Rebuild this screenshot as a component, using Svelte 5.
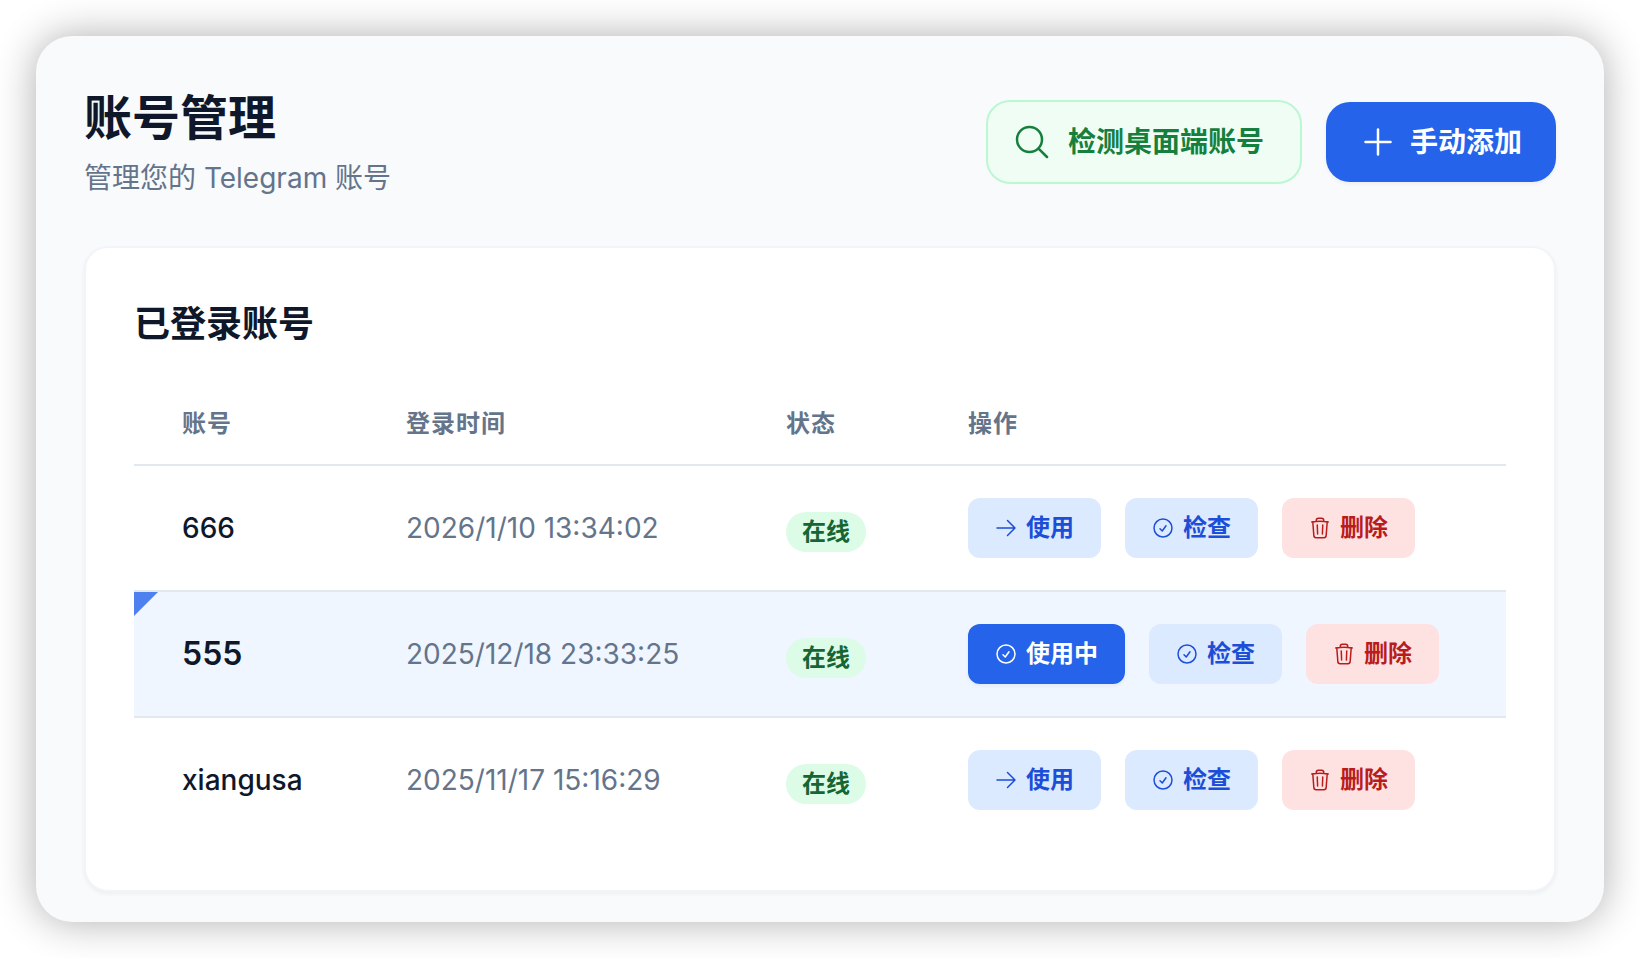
<script>
	const accounts = [
		{ name: '666', loginTime: '2026/1/10 13:34:02', active: false },
		{ name: '555', loginTime: '2025/12/18 23:33:25', active: true },
		{ name: 'xiangusa', loginTime: '2025/11/17 15:16:29', active: false }
	];

	const icons = {
		search: 'm21 21-5.197-5.197m0 0A7.5 7.5 0 1 0 5.196 5.196a7.5 7.5 0 0 0 10.607 10.607Z',
		plus: 'M12 4.5v15m7.5-7.5h-15',
		arrow: 'M13.5 4.5 21 12m0 0-7.5 7.5M21 12H3',
		check: 'M9 12.75 11.25 15 15 9.75M21 12a9 9 0 1 1-18 0 9 9 0 0 1 18 0Z',
		trash: 'm14.74 9-.346 9m-4.788 0L9.26 9m9.968-3.21c.342.052.682.107 1.022.166m-1.022-.165L18.16 19.673a2.25 2.25 0 0 1-2.244 2.077H8.084a2.25 2.25 0 0 1-2.244-2.077L4.772 5.79m14.456 0a48.108 48.108 0 0 0-3.478-.397m-12 .562c.34-.059.68-.114 1.022-.165m0 0a48.11 48.11 0 0 1 3.478-.397m7.5 0v-.916c0-1.18-.91-2.164-2.09-2.201a51.964 51.964 0 0 0-3.32 0c-1.18.037-2.09 1.022-2.09 2.201v.916m7.5 0a48.667 48.667 0 0 0-7.5 0'
	};
</script>

{#snippet icon(name)}
	<svg class="icon" viewBox="0 0 24 24" aria-hidden="true">
		<path d={icons[name]} />
	</svg>
{/snippet}

<main class="window">
	<header class="page-header">
		<div>
			<h1>账号管理</h1>
			<p>管理您的 Telegram 账号</p>
		</div>
		<div class="toolbar">
			<button type="button" class="btn btn--detect">{@render icon('search')}检测桌面端账号</button>
			<button type="button" class="btn btn--add">{@render icon('plus')}手动添加</button>
		</div>
	</header>

	<section class="card">
		<h2>已登录账号</h2>
		<table>
			<thead>
				<tr>
					<th class="col-name">账号</th>
					<th class="col-time">登录时间</th>
					<th class="col-status">状态</th>
					<th>操作</th>
				</tr>
			</thead>
			<tbody>
				{#each accounts as account}
					<tr class:active={account.active}>
						<td class="name">{account.name}</td>
						<td class="time">{account.loginTime}</td>
						<td class="status"><span class="badge">在线</span></td>
						<td>
							<div class="actions">
								{#if account.active}
									<button type="button" class="action action--current">{@render icon('check')}使用中</button>
								{:else}
									<button type="button" class="action">{@render icon('arrow')}使用</button>
								{/if}
								<button type="button" class="action">{@render icon('check')}检查</button>
								<button type="button" class="action action--delete">{@render icon('trash')}删除</button>
							</div>
						</td>
					</tr>
				{/each}
			</tbody>
		</table>
	</section>
</main>

<style>
	:global(body) {
		margin: 0;
		background: #fff;
	}

	.window {
		margin: 36px;
		padding: 50px 48px 30px;
		border-radius: 36px;
		background: #f8fafc;
		box-shadow: 0 0 40px rgba(0, 0, 0, .32);
		color: #0f172a;
		font-family: Inter, "Noto Sans CJK SC", sans-serif;
	}

	.window, .window * {
		box-sizing: border-box;
	}

	.page-header {
		display: flex;
		align-items: center;
		justify-content: space-between;
		margin-bottom: 48px;
	}

	h1, h2, p {
		margin: 0;
	}

	h1 {
		font-size: 48px;
		line-height: 64px;
		font-weight: 700;
	}

	p {
		margin-top: 8px;
		font-size: 28px;
		line-height: 40px;
		color: #64748b;
	}

	h2 {
		margin-bottom: 32px;
		font-size: 36px;
		line-height: 56px;
		font-weight: 600;
	}

	button {
		display: inline-flex;
		align-items: center;
		border: 0;
		font-family: inherit;
		font-weight: 600;
		white-space: nowrap;
		cursor: pointer;
	}

	.icon {
		flex-shrink: 0;
		fill: none;
		stroke: currentColor;
		stroke-width: 1.5;
		stroke-linecap: round;
		stroke-linejoin: round;
	}

	.toolbar {
		display: flex;
		align-items: center;
		gap: 24px;
	}

	.btn {
		padding: 20px 34px 20px 32px;
		border-radius: 24px;
		gap: 12px;
		font-size: 28px;
		line-height: 40px;
	}

	.btn .icon {
		width: 40px;
		height: 40px;
	}

	.btn--detect {
		padding: 20px 36px 20px 24px;
		gap: 16px;
		border: 2px solid #bbf7d0;
		background: #f0fdf4;
		color: #15803d;
	}

	.btn--add {
		background: #2563eb;
		color: #fff;
		box-shadow: 0 2px 4px rgba(0, 0, 0, .05);
	}

	.card {
		padding: 48px;
		border: 2px solid #f1f5f9;
		border-radius: 24px;
		background: #fff;
		box-shadow: 0 2px 4px rgba(0, 0, 0, .05);
	}

	table {
		width: 100%;
		table-layout: fixed;
		border-collapse: separate;
		border-spacing: 0;
	}

	th {
		padding: 24px 48px;
		border-bottom: 2px solid #e2e8f0;
		color: #64748b;
		font-size: 24px;
		line-height: 32px;
		font-weight: 600;
		letter-spacing: 1px;
		text-align: left;
		white-space: nowrap;
	}

	.col-name {
		width: 224px;
	}

	.col-time {
		width: 380px;
	}

	.col-status {
		width: 182px;
	}

	td {
		padding: 32px 0 32px 48px;
		border-bottom: 2px solid #e2e8f0;
		font-size: 28px;
		line-height: 40px;
		white-space: nowrap;
	}

	tbody tr:last-child td {
		border-bottom: 0;
	}

	.name {
		position: relative;
		font-weight: 500;
	}

	.time {
		color: #64748b;
	}

	.status {
		padding-top: 38px;
	}

	.active {
		background: #eff6ff;
	}

	.active .name {
		font-size: 32px;
		font-weight: 600;
	}

	/* corner marker of the account in use */
	.active .name::before {
		content: "";
		position: absolute;
		top: 0;
		left: 0;
		border-top: 24px solid #2563eb;
		border-right: 24px solid transparent;
		opacity: .8;
	}

	.badge {
		display: inline-block;
		padding: 4px 16px;
		border-radius: 20px;
		background: #dcfce7;
		color: #166534;
		font-size: 24px;
		line-height: 32px;
		font-weight: 600;
	}

	.actions {
		display: flex;
		gap: 24px;
	}

	.action {
		gap: 8px;
		padding: 14px 27px 14px 26px;
		border-radius: 12px;
		background: #dbeafe;
		color: #1d4ed8;
		font-size: 24px;
		line-height: 32px;
	}

	.action .icon {
		width: 24px;
		height: 24px;
	}

	.action--current {
		background: #2563eb;
		color: #fff;
		box-shadow: 0 2px 4px rgba(0, 0, 0, .05);
	}

	.action--delete {
		background: #fee2e2;
		color: #b91c1c;
	}
</style>
